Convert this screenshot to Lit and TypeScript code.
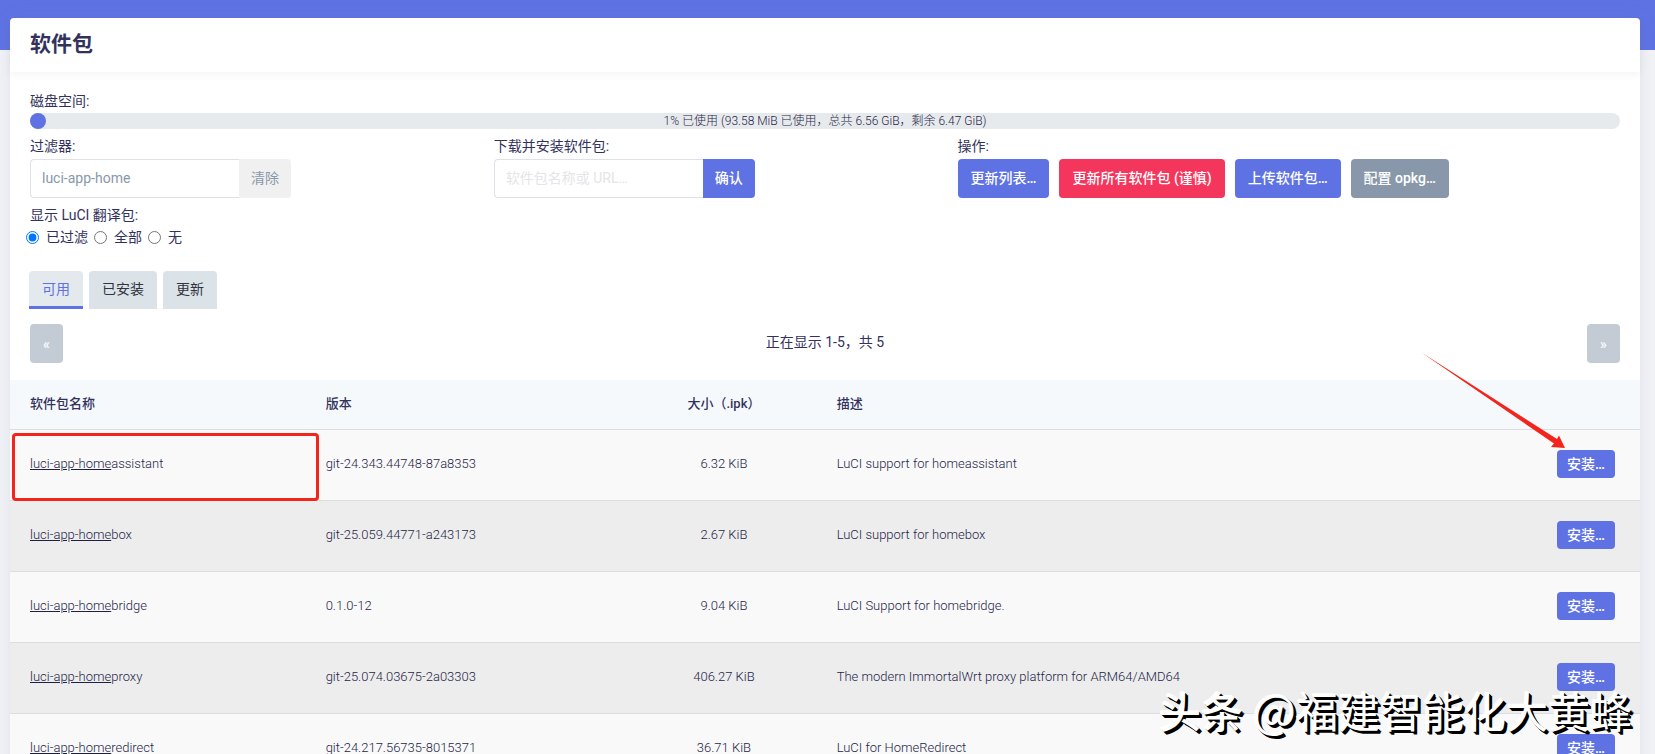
import { LitElement, html, css } from "lit";
import { customElement, state } from "lit/decorators.js";

interface Pkg {
  rest: string;
  version: string;
  size: string;
  description: string;
}

const PACKAGES: Pkg[] = [
  { rest: "assistant", version: "git-24.343.44748-87a8353", size: "6.32 KiB", description: "LuCI support for homeassistant" },
  { rest: "box", version: "git-25.059.44771-a243173", size: "2.67 KiB", description: "LuCI support for homebox" },
  { rest: "bridge", version: "0.1.0-12", size: "9.04 KiB", description: "LuCI Support for homebridge." },
  { rest: "proxy", version: "git-25.074.03675-2a03303", size: "406.27 KiB", description: "The modern ImmortalWrt proxy platform for ARM64/AMD64" },
  { rest: "redirect", version: "git-24.217.56735-8015371", size: "36.71 KiB", description: "LuCI for HomeRedirect" },
];

@customElement("app-root")
export class AppRoot extends LitElement {
  @state() private query = "luci-app-home";
  @state() private tab = 0;

  static styles = css`
    :host {
      display: block;
      position: relative;
      height: 100vh;
      overflow: hidden;
      background: linear-gradient(#5e72e4 50px, #f1f2f6 50px);
      color: #32325d;
      font: 14px/20px Roboto, "Noto Sans CJK SC", sans-serif;
      font-weight: 400;
    }
    * { box-sizing: border-box; }
    button, input { font: inherit; margin: 0; }
    .page { padding: 18px 15px 0 10px; }
    .card {
      position: relative;
      background: #fff;
      border-radius: 4px;
      box-shadow: 0 0 16px rgba(136, 152, 170, 0.15);
    }
    h1 {
      margin: 0;
      padding: 11px 20px 13px;
      font-size: 21px;
      line-height: 30px;
      font-weight: 700;
      box-shadow: 0 2px 8px rgba(0, 0, 0, 0.05);
    }
    .controls { padding: 18px 20px 0; }
    .label { display: block; padding-bottom: 1px; line-height: 22px; }
    .bar {
      position: relative;
      height: 16px;
      border-radius: 8px;
      background: #e7eaed;
      text-align: center;
      font-size: 12px;
      font-weight: 300;
      color: #1f1f48;
      line-height: 16px;
    }
    .fill {
      position: absolute;
      inset: 0 auto 0 0;
      border-radius: 8px;
      background: #5e72e4;
    }
    .columns {
      display: grid;
      grid-template-columns: 7fr 7fr 10fr;
      padding-top: 6px;
    }
    .label + .group, .label + .actions { margin-top: 1px; }
    .group { display: flex; height: 39px; }
    .group input {
      width: 209px;
      padding: 0 11px 1px;
      border: 1px solid #dee2e6;
      border-right: 0;
      border-radius: 4px 0 0 4px;
      background: #fff;
      color: #8898aa;
      outline: 0;
    }
    .group input::placeholder { color: #e3e5e8; }
    .btn {
      height: 39px;
      padding: 0 13px 1px;
      border: 0;
      border-radius: 4px;
      background: #5e72e4;
      color: #fff;
      font-weight: 500;
      white-space: nowrap;
    }
    .group .btn { padding: 0 12px 1px; border-radius: 0 4px 4px 0; }
    .group .clear { background: #f0f0f0; color: #8898aa; font-weight: 400; }
    .danger { background: #f5365c; }
    .neutral { background: #8898aa; }
    .actions { display: flex; gap: 10px; }
    fieldset { border: 0; margin: 0; padding: 6px 0 0; min-width: 0; }
    legend { float: left; padding: 0; line-height: 22px; }
    .radios { clear: both; display: flex; align-items: center; gap: 6px; margin-left: -4px; }
    .radios label { display: flex; align-items: center; gap: 7px; line-height: 22px; }
    .radios input { width: 13px; height: 13px; }
    .tabs { display: flex; gap: 6px; padding: 23px 19px 0; }
    .tab {
      height: 38px;
      padding: 0 13px 3px;
      border: 0;
      border-radius: 4px 4px 0 0;
      background: #dce3e8;
      color: #2f3440;
    }
    .tab.on {
      padding-bottom: 0;
      border-bottom: 3px solid #5e72e4;
      background: #e4e9ed;
      color: #5e72e4;
    }
    .pager {
      display: flex;
      align-items: center;
      justify-content: space-between;
      padding: 15px 20px 17px;
    }
    .pager span { padding-bottom: 3px; }
    .pager .btn { width: 33px; padding: 0; background: #c3cbd4; }
    table { width: 100%; table-layout: fixed; border-collapse: separate; border-spacing: 0; font-size: 13px; }
    th { height: 49px; padding: 0 10px 1px; background: #f6f9fc; font-weight: 500; text-align: left; }
    td { height: 71px; padding: 0 10px 2px; border-top: 1px solid #dbdde0; color: #1f1f48; font-weight: 300; }
    tr > :first-child { padding-left: 20px; }
    tr > :last-child { padding-right: 25px; text-align: right; }
    tr > .size { text-align: center; }
    .c-text { width: 18.75%; }
    .c-size { width: 12.6%; }
    .c-act { width: 150px; }
    tbody tr { background: #f9f9f9; }
    tbody tr:nth-child(even) { background: #ededed; }
    ins { text-decoration: underline; }
    .install { height: 28px; padding: 0 10px; font-size: 14px; }
    .box {
      position: absolute;
      left: 12px;
      top: 433px;
      width: 307px;
      height: 68px;
      border: 3px solid #f3241c;
      border-radius: 4px;
    }
    .arrow { position: absolute; left: 1420px; top: 350px; width: 146px; height: 100px; }
    .mark {
      position: absolute;
      right: 23px;
      bottom: 15px;
      font-family: "Noto Sans CJK SC", sans-serif;
      font-size: 42px;
      line-height: 58px;
      color: #fff;
      text-shadow: 1px 1px 0 #000, 2px 2px 0 #000, 3px 3px 0 #000, -1px -1px 0 #fff;
      white-space: nowrap;
    }
    .mark b { font-weight: 500; }
    .mark .at { font-size: 46px; }
  `;

  render() {
    return html`
      <main class="page">
        <section class="card">
          <h1>软件包</h1>
          <div class="controls">
            <span class="label">磁盘空间:</span>
            <div class="bar">
              <div class="fill" style="width:1%"></div>
              1% 已使用 (93.58 MiB 已使用，总共 6.56 GiB，剩余 6.47 GiB)
            </div>
            <div class="columns">
              <div>
                <label class="label" for="filter">过滤器:</label>
                <div class="group">
                  <input id="filter" type="text" .value=${this.query}
                    @input=${(e: Event) => (this.query = (e.target as HTMLInputElement).value)} />
                  <button class="btn clear" @click=${() => (this.query = "")}>清除</button>
                </div>
              </div>
              <div>
                <label class="label" for="install">下载并安装软件包:</label>
                <div class="group">
                  <input id="install" type="text" placeholder="软件包名称或 URL…" />
                  <button class="btn">确认</button>
                </div>
              </div>
              <div>
                <span class="label">操作:</span>
                <div class="actions">
                  <button class="btn">更新列表…</button>
                  <button class="btn danger">更新所有软件包 (谨慎)</button>
                  <button class="btn">上传软件包…</button>
                  <button class="btn neutral">配置 opkg…</button>
                </div>
              </div>
            </div>
            <fieldset>
              <legend>显示 LuCI 翻译包:</legend>
              <div class="radios">
                <label><input type="radio" name="i18n" checked />已过滤</label>
                <label><input type="radio" name="i18n" />全部</label>
                <label><input type="radio" name="i18n" />无</label>
              </div>
            </fieldset>
          </div>
          <nav class="tabs">
            ${["可用", "已安装", "更新"].map((name, i) => html`
              <button class="tab ${i === this.tab ? "on" : ""}" @click=${() => (this.tab = i)}>${name}</button>`)}
          </nav>
          <div class="pager">
            <button class="btn" aria-label="上一页">«</button>
            <span>正在显示 1-5，共 5</span>
            <button class="btn" aria-label="下一页">»</button>
          </div>
          <table>
            <colgroup>
              <col class="c-text" /><col class="c-text" /><col class="c-size" /><col /><col class="c-act" />
            </colgroup>
            <thead>
              <tr><th>软件包名称</th><th>版本</th><th class="size">大小（.ipk）</th><th>描述</th><th></th></tr>
            </thead>
            <tbody>
              ${PACKAGES.map((p) => html`
                <tr>
                  <td><ins>luci-app-home</ins>${p.rest}</td>
                  <td>${p.version}</td>
                  <td class="size">${p.size}</td>
                  <td>${p.description}</td>
                  <td><button class="btn install">安装…</button></td>
                </tr>`)}
            </tbody>
          </table>
        </section>
      </main>
      <div class="box"></div>
      <svg class="arrow" viewBox="0 0 146 100" aria-hidden="true">
        <path d="M0.7 2 L137 89 L139 85.5 L145 98 L131 97 L134 93.5 Z" fill="#f3241c" />
      </svg>
      <div class="mark"><b>头条</b> <span class="at">@</span>福建智能化大黄蜂</div>
    `;
  }
}
